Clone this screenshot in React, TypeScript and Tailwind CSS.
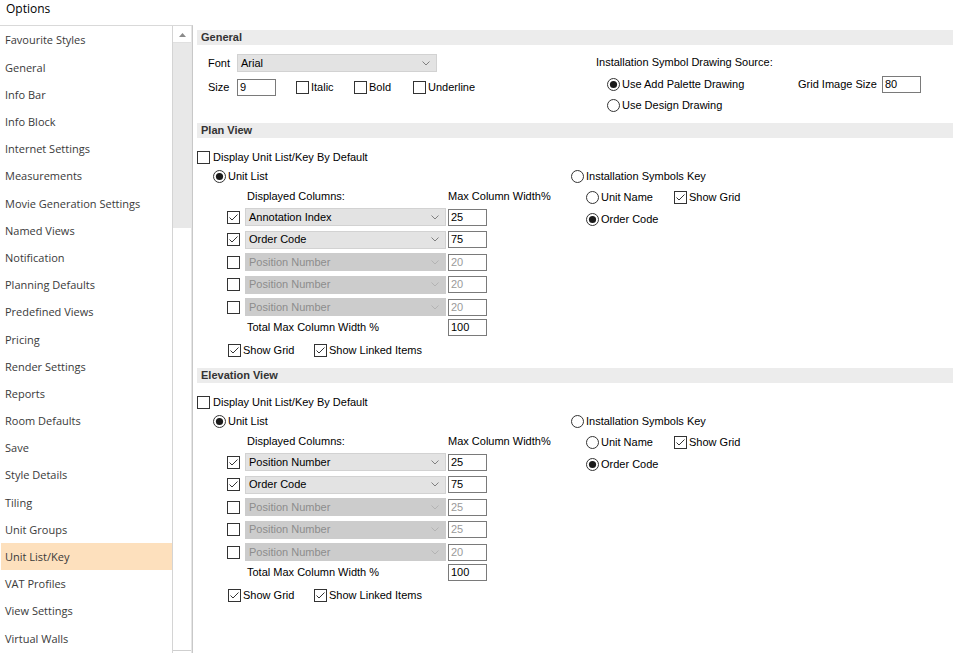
import React from "react";

const sections = [
  "Favourite Styles",
  "General",
  "Info Bar",
  "Info Block",
  "Internet Settings",
  "Measurements",
  "Movie Generation Settings",
  "Named Views",
  "Notification",
  "Planning Defaults",
  "Predefined Views",
  "Pricing",
  "Render Settings",
  "Reports",
  "Room Defaults",
  "Save",
  "Style Details",
  "Tiling",
  "Unit Groups",
  "Unit List/Key",
  "VAT Profiles",
  "View Settings",
  "Virtual Walls",
];

const planColumns = [
  { name: "Annotation Index", width: "25", on: true },
  { name: "Order Code", width: "75", on: true },
  { name: "Position Number", width: "20", on: false },
  { name: "Position Number", width: "20", on: false },
  { name: "Position Number", width: "20", on: false },
];

const elevationColumns = [
  { name: "Position Number", width: "25", on: true },
  { name: "Order Code", width: "75", on: true },
  { name: "Position Number", width: "25", on: false },
  { name: "Position Number", width: "25", on: false },
  { name: "Position Number", width: "20", on: false },
];

function CheckBox({ checked = false }: { checked?: boolean }) {
  return (
    <div className="w-[13px] h-[13px] shrink-0 border border-[#333] bg-white flex items-center justify-center">
      {checked && (
        <svg width="11" height="11" viewBox="0 0 11 11">
          <polyline points="1.5,5.5 4,8 9.5,2.5" fill="none" stroke="#333" strokeWidth="1" />
        </svg>
      )}
    </div>
  );
}

function Radio({ checked = false }: { checked?: boolean }) {
  return (
    <svg width="13" height="13" viewBox="0 0 13 13" className="shrink-0">
      <circle cx="6.5" cy="6.5" r="6" fill="white" stroke="#333" strokeWidth="1" />
      {checked && <circle cx="6.5" cy="6.5" r="3.6" fill="#1a1a1a" />}
    </svg>
  );
}

function Combo({ value, disabled = false, width }: { value: string; disabled?: boolean; width: string }) {
  return (
    <div
      className={`${width} h-[18px] shrink-0 flex items-center justify-between pl-[3px] pr-[6px] border ${
        disabled ? "bg-[#cccccc] border-[#cccccc] text-[#8d8d8d]" : "bg-[#e3e3e3] border-[#d2d2d2] text-black"
      }`}
    >
      <span>{value}</span>
      <svg width="8" height="5" viewBox="0 0 8 5">
        <polyline points="0.5,0.5 4,4 7.5,0.5" fill="none" stroke={disabled ? "#b3b3b3" : "#808080"} strokeWidth="1" />
      </svg>
    </div>
  );
}

function TextBox({ value, disabled = false, width = "w-[39px]" }: { value: string; disabled?: boolean; width?: string }) {
  return (
    <div
      className={`${width} h-[17px] shrink-0 border border-[#7a7a7a] bg-white pl-[2px] flex items-center ${
        disabled ? "text-[#9a9a9a]" : "text-black"
      }`}
    >
      {value}
    </div>
  );
}

function SectionHeader({ title }: { title: string }) {
  return (
    <div className="h-[15px] bg-[#ececec] pl-[4px] flex items-center font-bold text-[#333]">{title}</div>
  );
}

function UnitListBlock({ columns }: { columns: typeof planColumns }) {
  return (
    <div className="h-[230px] pt-[9px]">
      <div className="h-[20px] flex items-center gap-[3px]">
        <CheckBox />
        <span>Display Unit List/Key By Default</span>
      </div>
      <div className="flex">
        <div className="w-[374px]">
          <div className="h-[19px] pl-[16px] flex items-center gap-[2px]">
            <Radio checked />
            <span>Unit List</span>
          </div>
          <div className="h-[20px] pl-[50px] flex items-center">
            <span className="w-[201px]">Displayed Columns:</span>
            <span>Max Column Width%</span>
          </div>
          {columns.map((col, i) => (
            <div key={i} className="h-[22.5px] pl-[30px] flex items-center">
              <CheckBox checked={col.on} />
              <div className="ml-[5px]">
                <Combo value={col.name} disabled={!col.on} width="w-[201px]" />
              </div>
              <div className="ml-[2px]">
                <TextBox value={col.width} disabled={!col.on} />
              </div>
            </div>
          ))}
          <div className="h-[18px] pl-[50px] flex items-center">
            <span className="w-[201px]">Total Max Column Width %</span>
            <TextBox value="100" />
          </div>
          <div className="h-[27px] pl-[31px] flex items-center">
            <div className="w-[86px] flex items-center gap-[2px]">
              <CheckBox checked />
              <span>Show Grid</span>
            </div>
            <div className="flex items-center gap-[2px]">
              <CheckBox checked />
              <span>Show Linked Items</span>
            </div>
          </div>
        </div>
        <div>
          <div className="h-[19px] flex items-center gap-[2px]">
            <Radio />
            <span>Installation Symbols Key</span>
          </div>
          <div className="h-[23px] pl-[15px] flex items-center">
            <div className="w-[88px] flex items-center gap-[2px]">
              <Radio />
              <span>Unit Name</span>
            </div>
            <div className="flex items-center gap-[2px]">
              <CheckBox checked />
              <span>Show Grid</span>
            </div>
          </div>
          <div className="h-[20px] pl-[15px] flex items-center gap-[2px]">
            <Radio checked />
            <span>Order Code</span>
          </div>
        </div>
      </div>
    </div>
  );
}

export default function App() {
  return (
    <div className="w-[953px] h-[653px] bg-white overflow-hidden flex flex-col font-['Liberation_Sans',Arial,sans-serif] text-[11px] text-black leading-none">
      <div className="h-[25px] shrink-0 pl-[6px] pt-[2px] text-[12px] leading-[14px] font-['Open_Sans',sans-serif] text-black">
        Options
      </div>

      <div className="flex flex-1 min-h-0">
        <div className="w-[193px] shrink-0 flex border-t border-[#d9d9d9] border-r border-r-[#c8c8c8]">
          <div className="w-[172px] pl-[1px] pt-[0.4px] font-['Open_Sans',sans-serif] text-[11px] text-[#3a3a3a]">
            {sections.map((s) => (
              <div
                key={s}
                className={`h-[27.2px] pl-[4px] flex items-center ${s === "Unit List/Key" ? "bg-[#fde0bd]" : ""}`}
              >
                {s}
              </div>
            ))}
          </div>
          <div className="w-[20px] flex flex-col border-l border-[#d4d4d4] border-r border-r-[#e6e6e6]">
            <div className="h-[16px] flex items-center justify-center border-b border-[#e0e0e0] mt-[1px]">
              <svg width="7" height="4" viewBox="0 0 7 4">
                <polygon points="0,4 3.5,0 7,4" fill="#8a8a8a" />
              </svg>
            </div>
            <div className="h-[185px] bg-[#e8e8e8]" />
            <div className="flex-1" />
            <div className="h-[3px] border-t border-[#cfcfcf]" />
          </div>
        </div>

        <div className="flex-1 pl-[4px] pt-[5px]">
          <SectionHeader title="General" />
          <div className="h-[78px] flex">
            <div className="w-[399px] pl-[11px] pt-[9px]">
              <div className="h-[18px] flex items-center">
                <span className="w-[29px]">Font</span>
                <Combo value="Arial" width="w-[200px]" />
              </div>
              <div className="h-[17px] mt-[7px] flex items-center">
                <span className="w-[29px]">Size</span>
                <TextBox value="9" />
                <div className="ml-[20px] w-[58px] flex items-center gap-[2px]">
                  <CheckBox />
                  <span>Italic</span>
                </div>
                <div className="w-[59px] flex items-center gap-[2px]">
                  <CheckBox />
                  <span>Bold</span>
                </div>
                <div className="flex items-center gap-[2px]">
                  <CheckBox />
                  <span>Underline</span>
                </div>
              </div>
            </div>
            <div className="pt-[10px]">
              <div className="h-[14px] flex items-center">Installation Symbol Drawing Source:</div>
              <div className="mt-[5px] h-[21px] flex items-center">
                <div className="w-[202px] pl-[11px] flex items-center gap-[2px]">
                  <Radio checked />
                  <span>Use Add Palette Drawing</span>
                </div>
                <span className="w-[84px]">Grid Image Size</span>
                <TextBox value="80" />
              </div>
              <div className="h-[21px] pl-[11px] flex items-center gap-[2px]">
                <Radio />
                <span>Use Design Drawing</span>
              </div>
            </div>
          </div>

          <SectionHeader title="Plan View" />
          <UnitListBlock columns={planColumns} />

          <SectionHeader title="Elevation View" />
          <UnitListBlock columns={elevationColumns} />
        </div>
      </div>
    </div>
  );
}
